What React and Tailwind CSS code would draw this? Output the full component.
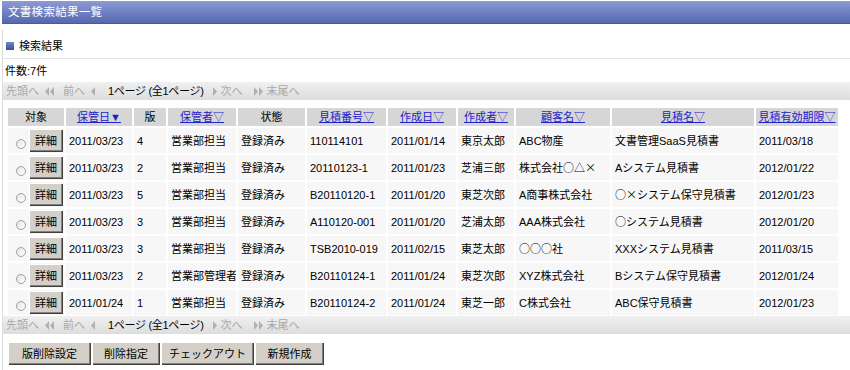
import React from "react";

const rows = [
  ["2011/03/23", "4", "営業部担当", "登録済み", "110114101", "2011/01/14", "東京太郎", "ABC物産", "文書管理SaaS見積書", "2011/03/18"],
  ["2011/03/23", "2", "営業部担当", "登録済み", "20110123-1", "2011/01/23", "芝浦三郎", "株式会社○△×", "Aシステム見積書", "2012/01/22"],
  ["2011/03/23", "5", "営業部担当", "登録済み", "B20110120-1", "2011/01/20", "東芝次郎", "A商事株式会社", "○×システム保守見積書", "2012/01/23"],
  ["2011/03/23", "3", "営業部担当", "登録済み", "A110120-001", "2011/01/20", "芝浦太郎", "AAA株式会社", "○システム見積書", "2012/01/20"],
  ["2011/03/23", "3", "営業部担当", "登録済み", "TSB2010-019", "2011/02/15", "東芝太郎", "○○○社", "XXXシステム見積書", "2011/03/15"],
  ["2011/03/23", "2", "営業部管理者", "登録済み", "B20110124-1", "2011/01/24", "東芝次郎", "XYZ株式会社", "Bシステム保守見積書", "2012/01/24"],
  ["2011/01/24", "1", "営業部担当", "登録済み", "B20110124-2", "2011/01/24", "東芝一郎", "C株式会社", "ABC保守見積書", "2012/01/23"],
];

const headers = [
  { t: "対象" },
  { t: "保管日▼", link: true },
  { t: "版" },
  { t: "保管者▽", link: true },
  { t: "状態" },
  { t: "見積番号▽", link: true },
  { t: "作成日▽", link: true },
  { t: "作成者▽", link: true },
  { t: "顧客名▽", link: true },
  { t: "見積名▽", link: true },
  { t: "見積有効期限▽", link: true },
];

const GRID =
  "grid grid-cols-[58px_68px_34px_70px_69px_81px_70px_58px_96px_144px_84px]";

const btn =
  "bg-[#d4d0c8] text-black flex items-center justify-center whitespace-nowrap shadow-[inset_1px_1px_0_#ffffff,inset_-1px_-1px_0_#404040,inset_-2px_-2px_0_#808080]";

function Cell({ text }) {
  const parts = text.split(/([○△×])/);
  return (
    <>
      {parts.map((p, i) =>
        /^[○△×]$/.test(p) ? (
          <span key={i} className="font-['Noto_Sans_CJK_JP']">
            {p}
          </span>
        ) : (
          <React.Fragment key={i}>{p}</React.Fragment>
        )
      )}
    </>
  );
}

function Tri({ dir = "left", double = false }) {
  const one = (x) =>
    dir === "left" ? (
      <polygon key={x} points={`${x + 4},0 ${x + 4},9 ${x},4.5`} fill="#b0b0b0" />
    ) : (
      <polygon key={x} points={`${x},0 ${x},9 ${x + 4},4.5`} fill="#b0b0b0" />
    );
  return (
    <svg width={double ? 10 : 5} height="9" viewBox={`0 0 ${double ? 10 : 5} 9`} className="block">
      {double ? [one(0), one(5)] : one(0)}
    </svg>
  );
}

function Pager() {
  return (
    <div className="h-[18px] flex items-center bg-gradient-to-b from-[#f0f0f0] to-[#dddddd] text-[#a8a8a8] pl-[3px] whitespace-nowrap">
      <span>先頭へ</span>
      <span className="ml-[6px]"><Tri dir="left" double /></span>
      <span className="ml-[8px]">前へ</span>
      <span className="ml-[6px]"><Tri dir="left" /></span>
      <span className="ml-[12px] text-black tracking-[-0.3px]">1ページ (全1ページ)</span>
      <span className="ml-[9px]"><Tri dir="right" /></span>
      <span className="ml-[3px]">次へ</span>
      <span className="ml-[11px]"><Tri dir="right" double /></span>
      <span className="ml-[3px]">末尾へ</span>
    </div>
  );
}

export default function App() {
  return (
    <div
      className="w-[850px] h-[370px] bg-white overflow-hidden text-[11px] leading-[14px] text-black"
      style={{ fontFamily: '"Liberation Sans", "Noto Sans CJK JP", sans-serif' }}
    >
      <div className="mt-[1px] ml-[2px] h-[23px] flex items-center pl-[6px] text-white text-[11.5px] tracking-[0.3px] bg-gradient-to-b from-[#8c9bd6] to-[#5668b0] border-b border-[#4a5a9e]">
        文書検索結果一覧
      </div>
      <div className="mt-[6px] ml-[2px] border-l border-[#dcdcdc] h-[340px]">
        <div className="h-[29px] pt-[3px] flex items-center border-b border-[#e4e4e4]">
          <span className="ml-[3px] w-[8px] h-[8px] bg-gradient-to-b from-[#7585c8] to-[#3f4f98] inline-block" />
          <span className="ml-[5px]">検索結果</span>
        </div>
        <div className="h-[23px] flex items-center pl-[2px]">件数:7件</div>
        <Pager />
        <div className="mt-[8px] ml-[5px]">
          <div className={`${GRID} h-[18px]`}>
            {headers.map((h, i) => (
              <div
                key={i}
                className="bg-[#d6d6d6] border-r-2 border-white flex items-center justify-center whitespace-nowrap"
              >
                {h.link ? (
                  <span className="text-[#2222cc] underline">{h.t}</span>
                ) : (
                  h.t
                )}
              </div>
            ))}
          </div>
          {rows.map((r, ri) => (
            <div key={ri} className={`${GRID} h-[27px]`}>
              <div className="bg-[#f7f7f7] border-r-2 border-t-2 border-white flex items-center">
                <span className="ml-[8px] mt-[6px] w-[10px] h-[10px] rounded-full border border-[#a0a0a0] bg-gradient-to-br from-[#e4e4e4] to-white inline-block" />
                <div className={`${btn} ml-[3px] w-[34px] h-[23px]`}>詳細</div>
              </div>
              {r.map((c, ci) => (
                <div
                  key={ci}
                  className="bg-[#f7f7f7] border-r-2 border-t-2 border-white flex items-center pl-[3px] whitespace-nowrap overflow-hidden"
                >
                  <span><Cell text={c} /></span>
                </div>
              ))}
            </div>
          ))}
        </div>
        <div className="mt-[1px]">
          <Pager />
        </div>
        <div className="mt-[8px] ml-[5px] flex gap-[1px] h-[23px]">
          <div className={`${btn} w-[83px]`}>版削除設定</div>
          <div className={`${btn} w-[68px]`}>削除指定</div>
          <div className={`${btn} w-[93px]`}>チェックアウト</div>
          <div className={`${btn} w-[69px]`}>新規作成</div>
        </div>
      </div>
    </div>
  );
}
